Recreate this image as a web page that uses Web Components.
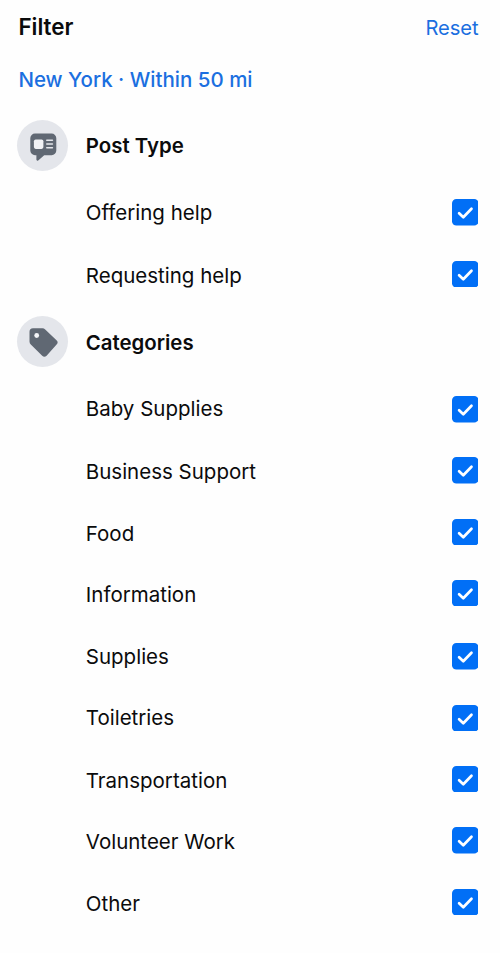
<!DOCTYPE html>
<html lang="en">
<head>
<meta charset="utf-8">
<title>Filter</title>
<style>
body { margin: 0; background: #fefefe; font-family: Inter, "Noto Sans", sans-serif; color: #0b0b0c; }
filter-row.low { --drop: 3.8px; }
filter-row.gap { margin-top: 2px; }
</style>
</head>
<body>
<filter-panel>
  <filter-header slot="header">Filter<span slot="action">Reset</span></filter-header>
  <filter-location slot="location">New York · Within 50 mi</filter-location>
  <filter-section>
    <section-icon slot="icon" kind="post"></section-icon>
    <span slot="title">Post Type</span>
    <filter-row>Offering help</filter-row>
    <filter-row class="low">Requesting help</filter-row>
  </filter-section>
  <filter-section>
    <section-icon slot="icon" kind="tag"></section-icon>
    <span slot="title">Categories</span>
    <filter-row>Baby Supplies</filter-row>
    <filter-row class="low">Business Support</filter-row>
    <filter-row class="low">Food</filter-row>
    <filter-row class="low">Information</filter-row>
    <filter-row class="gap">Supplies</filter-row>
    <filter-row>Toiletries</filter-row>
    <filter-row class="low">Transportation</filter-row>
    <filter-row class="low">Volunteer Work</filter-row>
    <filter-row class="low">Other</filter-row>
  </filter-section>
</filter-panel>
<script>
const define = (name, html, setup) => customElements.define(name, class extends HTMLElement {
  constructor() {
    super();
    const t = document.createElement('template');
    t.innerHTML = html;
    this.attachShadow({ mode: 'open' }).append(t.content.cloneNode(true));
  }
  connectedCallback() { if (setup) setup(this); }
});

define('filter-panel', `
<style>
:host { display: block; box-sizing: border-box; height: 953px; padding: 0 21.6px 0 17.4px; overflow: hidden; }
</style>
<slot name="header"></slot><slot name="location"></slot><slot></slot>`);

define('filter-header', `
<style>
:host { display: flex; justify-content: space-between; align-items: baseline; height: 48px; padding-top: 13px; box-sizing: border-box; line-height: 28px; }
.t { font-size: 22.4px; font-weight: 600; padding-left: 1px; }
.a { font-size: 20.2px; color: #1b6fe0; letter-spacing: -0.1px; }
</style>
<span class="t"><slot></slot></span><span class="a"><slot name="action"></slot></span>`);

define('filter-location', `
<style>
:host { display: block; height: 71.5px; padding: 19px 0 0 1px; box-sizing: border-box; font-size: 20.5px; font-weight: 500; line-height: 26px; color: #1b6fe0; }
</style>
<slot></slot>`);

define('filter-section', `
<style>
:host { display: block; padding-bottom: 11.4px; }
header { display: flex; align-items: center; gap: 17.4px; height: 51px; margin-bottom: 11.5px; }
.title { font-size: 20.4px; font-weight: 600; line-height: 26px; padding-top: 2.2px; }
</style>
<header><slot name="icon"></slot><span class="title"><slot name="title"></slot></span></header>
<slot></slot>`);

const icons = {
  post: `<path fill="#606873" d="M18 13.5h16.6a4.7 4.7 0 0 1 4.7 4.7v12.3a4.7 4.7 0 0 1-4.7 4.7h-7.4l-6 5.2c-.8.7-1.8.2-1.8-.8v-4.4H18a4.7 4.7 0 0 1-4.7-4.7V18.2a4.7 4.7 0 0 1 4.7-4.7z"/>
    <rect x="16.9" y="19.4" width="9.5" height="9.5" rx="1.8" fill="#f0f1f4"/>
    <path stroke="#e4e6eb" stroke-width="1.6" stroke-linecap="round" d="M29.8 20.2h5.6M29.8 24h5.6M29.8 27.8h5.6"/>`,
  tag: `<path fill="#606873" d="M16 12.3h9.4a4 4 0 0 1 2.8 1.1l11.3 10.8a3 3 0 0 1 .1 4.3L29.6 39.7a3.1 3.1 0 0 1-4.4.1L13.8 28.6a4.2 4.2 0 0 1-1.3-3V15.8a3.5 3.5 0 0 1 3.5-3.5z"/>
    <circle cx="19.7" cy="19.5" r="2.4" fill="#f4f5f8"/>`
};
define('section-icon', `
<style>
:host { display: block; width: 51px; height: 51px; border-radius: 50%; background: #e4e6eb; }
svg { display: block; }
</style>
<svg width="51" height="51" viewBox="0 0 51 51" fill="none"></svg>`,
  el => { el.shadowRoot.querySelector('svg').innerHTML = icons[el.getAttribute('kind')]; });

define('check-box', `
<style>
:host { display: block; width: 26.6px; height: 26.6px; }
svg { display: block; }
</style>
<svg width="26.6" height="26.6" viewBox="0 0 26.6 26.6" fill="none">
  <rect width="26.6" height="26.6" rx="4.4" fill="#016ff6"/>
  <path d="M7.1 14.2l4.2 4.1 8.2-8.5" stroke="#fff" stroke-width="2.7" stroke-linecap="round" stroke-linejoin="round"/>
</svg>`);

define('filter-row', `
<style>
:host { display: flex; align-items: center; justify-content: space-between; height: 61.33px; padding-left: 68.4px; }
span { font-size: 20.5px; line-height: 26px; padding-top: var(--drop, 0.2px); }
</style>
<span><slot></slot></span><check-box></check-box>`);
</script>
</body>
</html>
